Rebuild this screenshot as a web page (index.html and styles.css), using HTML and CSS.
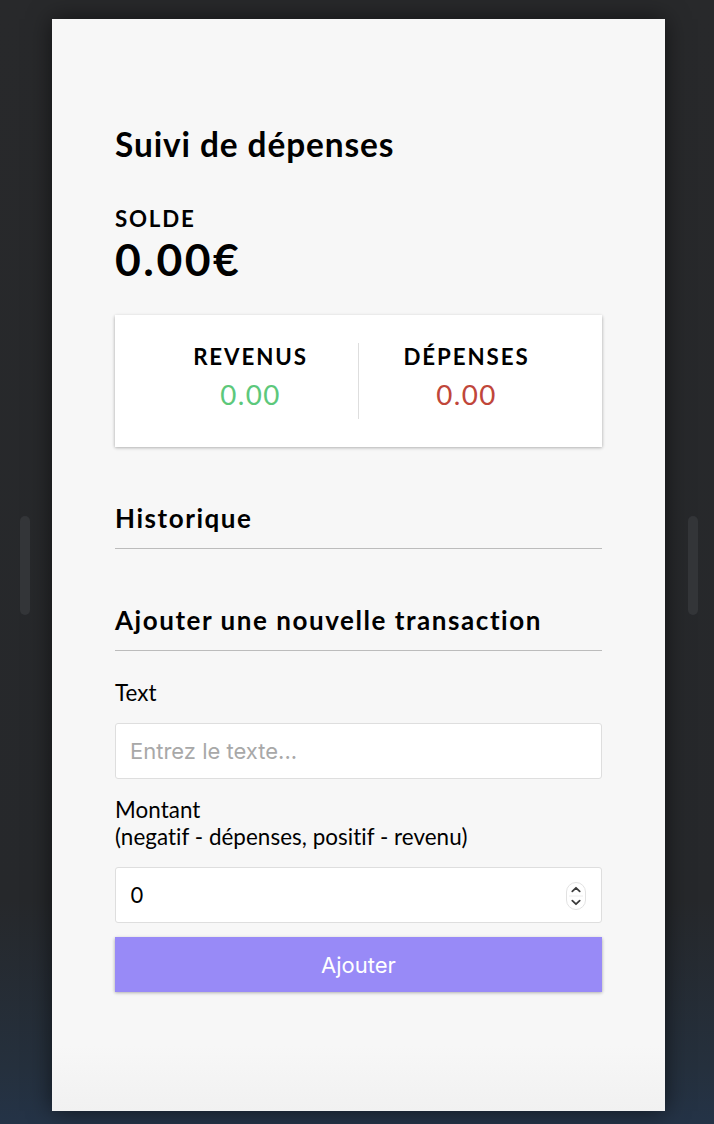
FILE: index.html
```html
<!DOCTYPE html>
<html lang="fr">
<head>
<meta charset="utf-8">
<title>Suivi de dépenses</title>
<link rel="stylesheet" href="styles.css">
</head>
<body>
<div class="handle handle-left"></div>
<div class="handle handle-right"></div>
<main class="panel">
  <h2 class="title">Suivi de dépenses</h2>
  <h4 class="balance-label">Solde</h4>
  <h1 class="balance">0.00€</h1>
  <div class="inc-exp">
    <div class="inc-exp-col">
      <h4 class="col-label">Revenus</h4>
      <p class="money plus">0.00</p>
    </div>
    <div class="inc-exp-col">
      <h4 class="col-label">Dépenses</h4>
      <p class="money minus">0.00</p>
    </div>
  </div>
  <h3 class="section">Historique</h3>
  <h3 class="section">Ajouter une nouvelle transaction</h3>
  <form class="form">
    <label class="label label-first" for="text">Text</label>
    <input class="field" type="text" id="text" placeholder="Entrez le texte...">
    <label class="label label-amount" for="amount">Montant <br>(negatif - dépenses, positif - revenu)</label>
    <div class="number-wrap">
      <input class="field field-number" type="number" id="amount" value="0">
      <svg class="spinner" width="20" height="28" viewBox="0 0 20 28">
        <rect x="0.5" y="0.5" width="19" height="27" rx="9.5" fill="#fff" stroke="#e2e2e2"/>
        <line x1="3" y1="14" x2="17" y2="14" stroke="#ececec" stroke-width="1"/>
        <path d="M6.3 9.3 L10 5.8 L13.7 9.3" fill="none" stroke="#3a3a3a" stroke-width="1.8" stroke-linecap="round" stroke-linejoin="round"/>
        <path d="M6.3 18.7 L10 22.2 L13.7 18.7" fill="none" stroke="#3a3a3a" stroke-width="1.8" stroke-linecap="round" stroke-linejoin="round"/>
      </svg>
    </div>
    <button class="btn" type="button">Ajouter</button>
  </form>
</main>
</body>
</html>
```

FILE: styles.css
```css
* {
  box-sizing: border-box;
}

html, body {
  margin: 0;
  padding: 0;
}

body {
  width: 714px;
  height: 1124px;
  overflow: hidden;
  background: linear-gradient(to bottom, #28292b 0%, #26282b 80%, #25303d 95%, #243347 100%);
  font-family: "Lato", "Noto Sans", sans-serif;
  color: #000;
  position: relative;
  padding-top: 19px;
}

.handle {
  position: absolute;
  top: 516px;
  width: 10px;
  height: 99px;
  border-radius: 5px;
  background: #333538;
}

.handle-left {
  left: 20px;
}

.handle-right {
  left: 688px;
}

.panel {
  margin-left: 52px;
  width: 613px;
  height: 1092px;
  background: linear-gradient(to bottom, #f7f7f7 0%, #f7f7f7 94%, #f1f1f1 100%);
  box-shadow: 0 0 22px rgba(0, 0, 0, 0.55);
  padding: 105px 63px 0;
}

.title {
  margin: 0;
  font-size: 33.4px;
  line-height: 40px;
  font-weight: 700;
  letter-spacing: 0.9px;
}

.balance-label {
  margin: 41px 0 0;
  font-size: 22.3px;
  line-height: 27px;
  font-weight: 700;
  text-transform: uppercase;
  letter-spacing: 1.8px;
}

.balance {
  margin: 0;
  font-size: 44.5px;
  line-height: 53px;
  font-weight: 700;
  letter-spacing: 2.5px;
}

.inc-exp {
  display: flex;
  background: #fff;
  box-shadow: 0 1.4px 4px rgba(0, 0, 0, 0.12), 0 1.4px 3px rgba(0, 0, 0, 0.24);
  padding: 28px;
  margin: 30px 0 0;
}

.inc-exp-col {
  flex: 1;
  text-align: center;
}

.inc-exp-col:first-child {
  border-right: 1px solid #dedede;
}

.col-label {
  margin: 0;
  font-size: 22.3px;
  line-height: 27px;
  font-weight: 700;
  text-transform: uppercase;
  letter-spacing: 1.9px;
}

.money {
  margin: 7px 0;
  font-size: 27.8px;
  line-height: 35px;
  letter-spacing: 1.4px;
}

.plus {
  color: #5cc87b;
}

.minus {
  color: #c0463a;
}

.section {
  margin: 56px 0 0;
  padding-bottom: 14px;
  border-bottom: 1.4px solid #bcbcbc;
  font-size: 26px;
  line-height: 31px;
  font-weight: 700;
  letter-spacing: 1.55px;
}

.form {
  margin: 0;
}

.label {
  display: block;
  font-size: 22.4px;
  line-height: 27px;
  letter-spacing: 0.05px;
}

.label-first {
  margin: 28px 0 17px;
}

.label-amount {
  margin: 17px 0 17px;
}

.field {
  display: block;
  width: 100%;
  height: 56px;
  border: 1px solid #dedede;
  border-radius: 3px;
  background: #fff;
  padding: 0 14px;
  font-family: "Inter", "Liberation Sans", sans-serif;
  font-size: 22px;
  color: #000;
  outline: none;
}

.field::placeholder {
  color: #a8a8a8;
}

.number-wrap {
  position: relative;
}

.field-number::-webkit-inner-spin-button,
.field-number::-webkit-outer-spin-button {
  -webkit-appearance: none;
  margin: 0;
}

.spinner {
  position: absolute;
  right: 16px;
  top: 15px;
}

.btn {
  display: block;
  width: 100%;
  height: 55px;
  margin: 14px 0 0;
  border: 0;
  background: #988af7;
  color: #fff;
  font-family: "Inter", "Liberation Sans", sans-serif;
  font-size: 22px;
  box-shadow: 0 1.4px 4px rgba(0, 0, 0, 0.12), 0 1.4px 3px rgba(0, 0, 0, 0.24);
}
```
